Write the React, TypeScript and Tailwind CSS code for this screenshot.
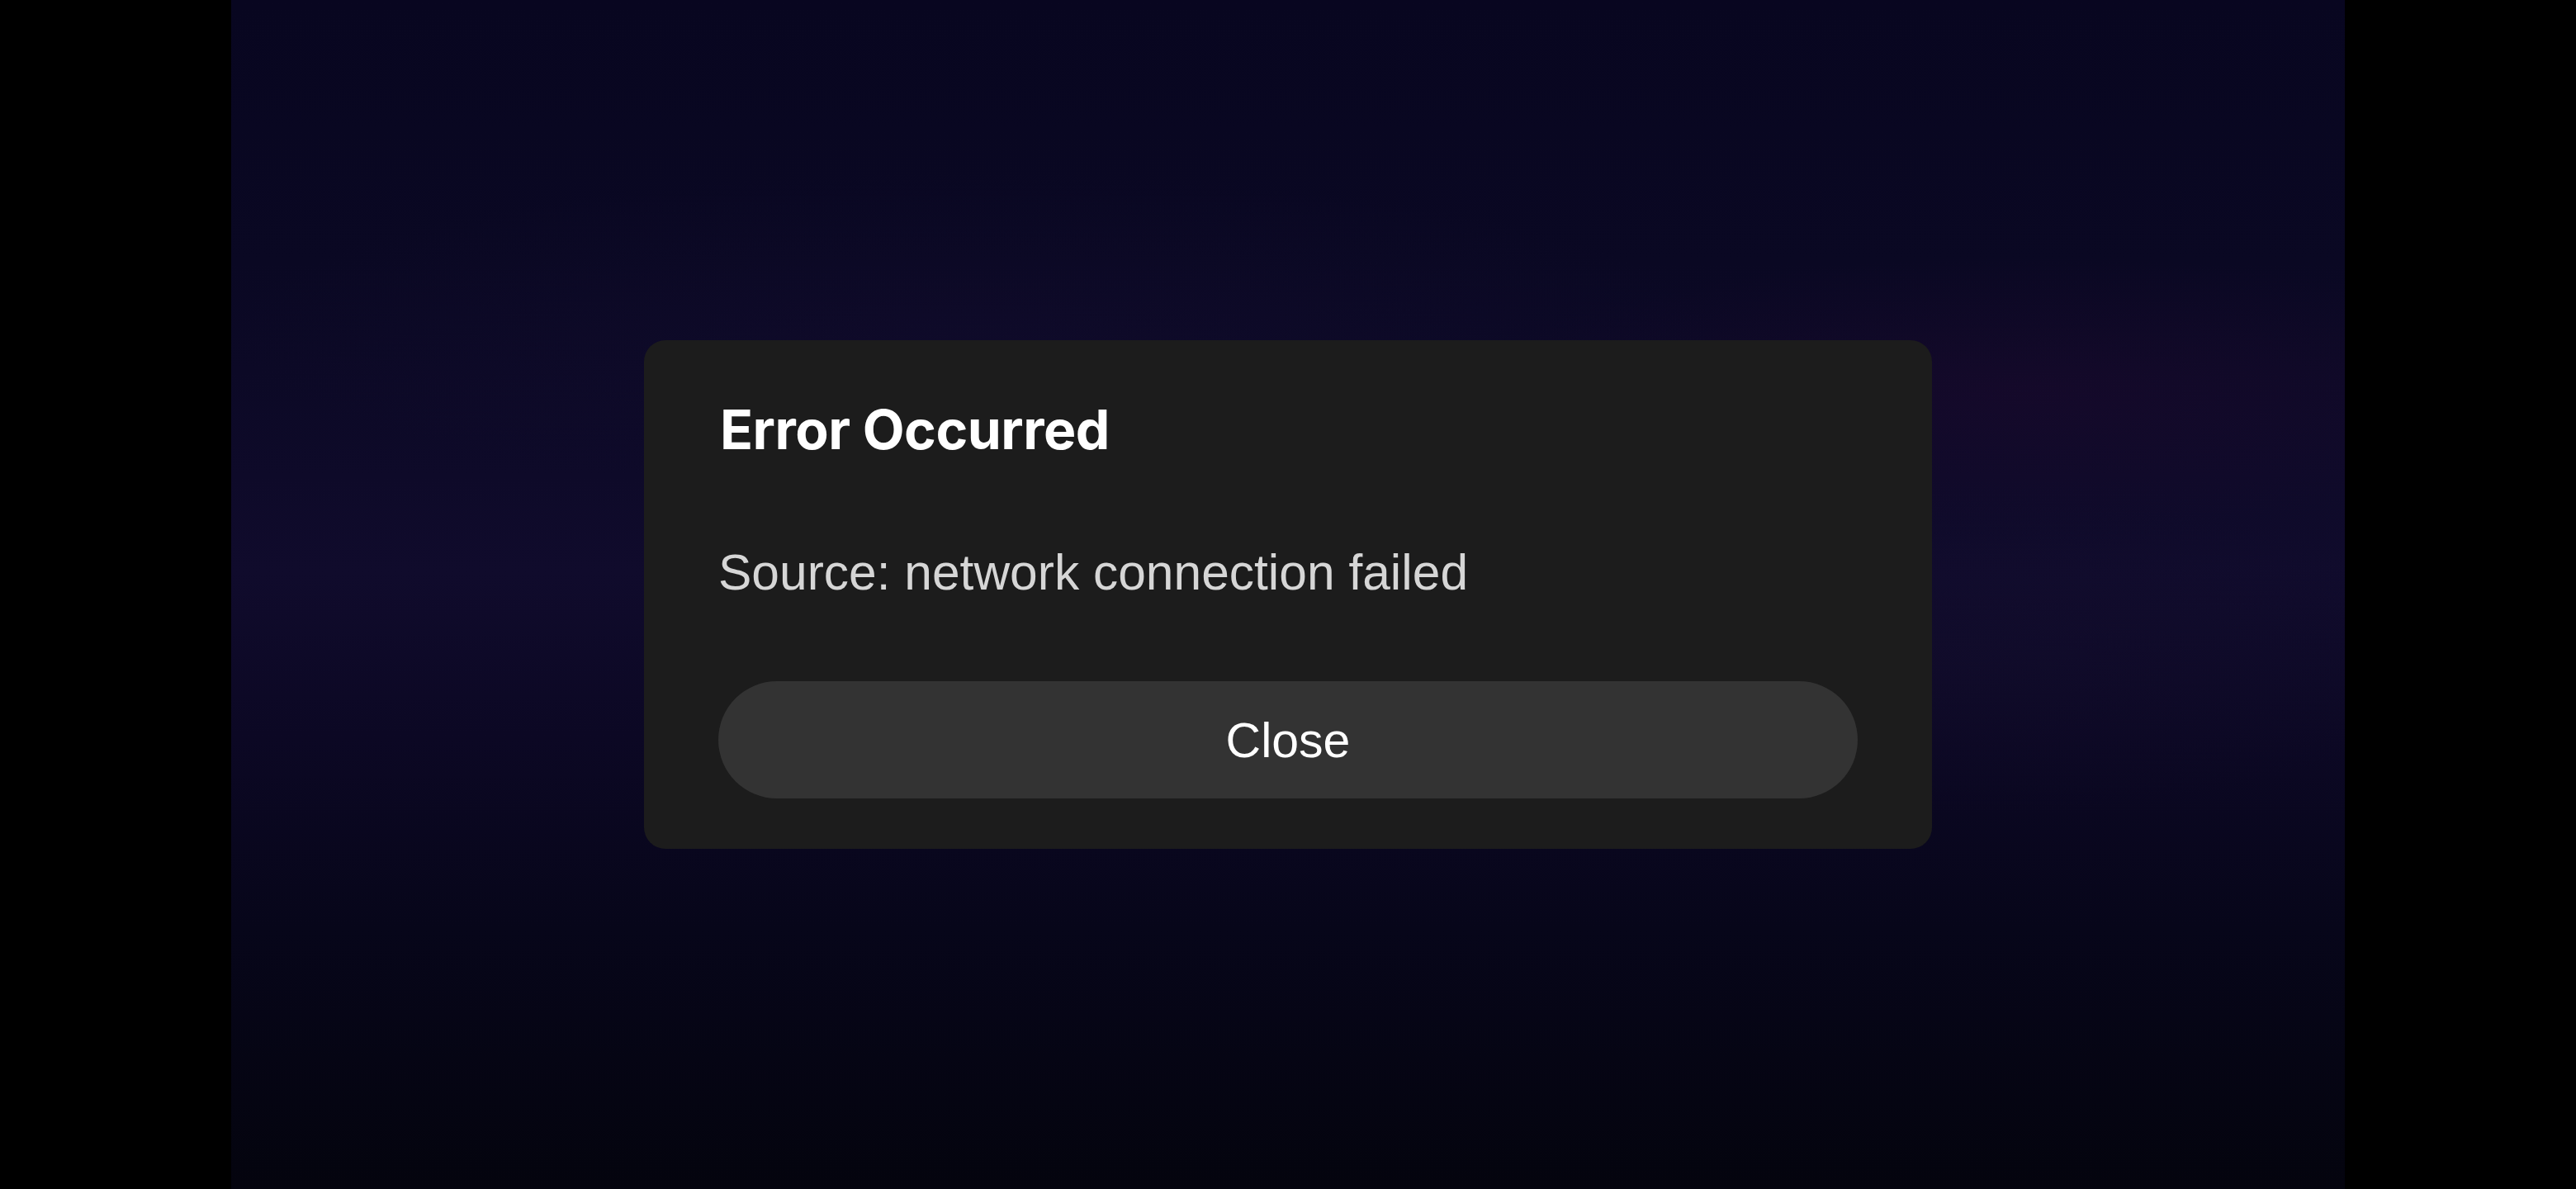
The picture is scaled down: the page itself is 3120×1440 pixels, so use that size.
import React from "react";

export default function App() {
  return (
    <div className="flex h-[1440px] w-[3120px] bg-black overflow-hidden">
      <div className="w-[280px] shrink-0 bg-black" />
      <div className="relative flex flex-1 items-center justify-center bg-[linear-gradient(180deg,#080620_0%,#0a0823_22%,#0e0a29_40%,#100b2c_48%,#0c0824_62%,#07061a_78%,#04040e_100%)]">
        <div className="pointer-events-none absolute inset-0 bg-[radial-gradient(ellipse_900px_220px_at_85%_33%,rgba(50,10,55,0.22),transparent_75%)]" />
        <div className="pointer-events-none absolute inset-0 bg-[radial-gradient(ellipse_1200px_260px_at_35%_28%,rgba(30,18,60,0.18),transparent_75%)]" />
        <div className="pointer-events-none absolute inset-0 bg-[radial-gradient(ellipse_900px_260px_at_80%_55%,rgba(25,18,50,0.25),transparent_75%)]" />
        <div className="relative flex w-[1560px] flex-col rounded-[26px] bg-[#1c1c1c] px-[90px] pt-[75px] pb-[61px]">
          <h1 className="pl-[2px] font-['Inter',sans-serif] text-[66px] font-bold leading-none tracking-[-0.5px] text-white">
            Error Occurred
          </h1>
          <p className="mt-[110px] font-['Liberation_Sans',Arial,sans-serif] text-[60.5px] leading-none text-[#d6d6d6]">
            Source: network connection failed
          </p>
          <button className="mt-[102px] flex h-[142px] w-full items-center justify-center rounded-full bg-[#333333] pt-[2px] font-['Liberation_Sans',Arial,sans-serif] text-[59px] leading-none text-white">
            Close
          </button>
        </div>
      </div>
      <div className="w-[280px] shrink-0 bg-black" />
    </div>
  );
}
